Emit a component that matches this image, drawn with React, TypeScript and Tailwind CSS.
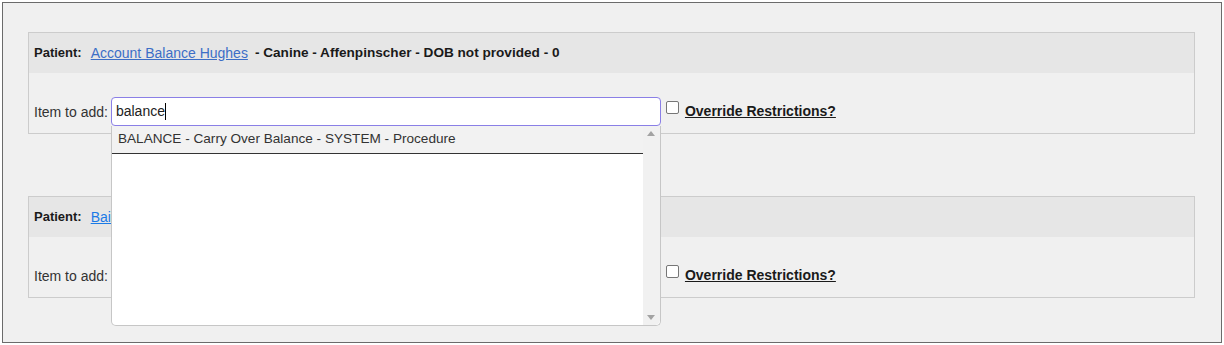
import * as React from 'react';

const font = { fontFamily: '"Liberation Sans", Arial, sans-serif' };

interface PatientPanelProps {
    name: string;
    details: string;
    linkClass: string;
    query?: string;
    focused?: boolean;
    children?: React.ReactNode;
}

function PatientPanel({ name, details, linkClass, query, focused, children }: PatientPanelProps) {
    return (
        <div className="border border-[#cccccc] bg-[#f0f0f0]">
            <div className="flex h-[40px] items-center bg-[#e6e6e6] pl-[5px] font-bold text-[#1a1a1a]">
                <span className="text-[13px]">Patient:</span>
                <a href="#" className={`ml-[9px] text-[14px] font-normal underline ${linkClass}`}>
                    {name}
                </a>
                <span className="ml-[7px] text-[13.6px]">{details}</span>
            </div>
            <div className="flex items-start pb-[7px] pl-[5px] pt-[24px]">
                <span className="mt-[5px] text-[14px] text-[#333333]">Item to add:</span>
                <div className="relative ml-[3px]">
                    <div
                        className={`flex h-[29px] w-[550px] items-center rounded-[4px] border bg-white pl-[4px] text-[14px] text-[#222222] ${
                            focused ? 'border-[#8a7fe6]' : 'border-[#bbbbbb]'
                        }`}
                    >
                        <span>{query}</span>
                        {focused ? <span className="h-[17px] w-px bg-black" /> : null}
                    </div>
                    {children}
                </div>
                <span className="ml-[5px] mt-[4px] h-[13px] w-[13px] rounded-[2px] border border-[#767676] bg-white" />
                <span className="ml-[6px] mt-[4px] text-[14px] font-bold text-[#1a1a1a] underline">
                    Override Restrictions?
                </span>
            </div>
        </div>
    );
}

function Suggestions() {
    return (
        <div className="absolute left-0 top-[29px] z-20 flex h-[200px] w-[550px] rounded-b-[5px] border border-t-0 border-[#c6c6c6] bg-white">
            <div className="flex-1">
                <div className="flex h-[28px] items-center border-b border-[#333333] bg-[#f2f2f2] pl-[6px] text-[13.6px] text-[#333333]">
                    BALANCE - Carry Over Balance - SYSTEM - Procedure
                </div>
            </div>
            <div className="flex w-[17px] flex-col items-center justify-between rounded-br-[5px] bg-[#f1f1f1] py-[5px]">
                <svg width="8" height="5" viewBox="0 0 8 5">
                    <path d="M0 5 L4 0 L8 5 Z" fill="#a3a3a3" />
                </svg>
                <svg width="8" height="5" viewBox="0 0 8 5">
                    <path d="M0 0 L4 5 L8 0 Z" fill="#a3a3a3" />
                </svg>
            </div>
        </div>
    );
}

export default function App() {
    return (
        <div className="h-[345px] w-[1224px] bg-white p-[2px]" style={font}>
            <div className="h-[341px] border border-[#6b6b6b] bg-[#f0f0f0] pl-[25px] pr-[26px] pt-[29px]">
                <PatientPanel
                    name="Account Balance Hughes"
                    details="- Canine - Affenpinscher - DOB not provided - 0"
                    linkClass="text-[#3c6ec6]"
                    query="balance"
                    focused
                >
                    <Suggestions />
                </PatientPanel>
                <div className="mt-[62px]">
                    <PatientPanel
                        name="Bailey Hughes"
                        details="- Canine - Beagle - DOB not provided - 0"
                        linkClass="text-[#1a7ae6]"
                    />
                </div>
            </div>
        </div>
    );
}
